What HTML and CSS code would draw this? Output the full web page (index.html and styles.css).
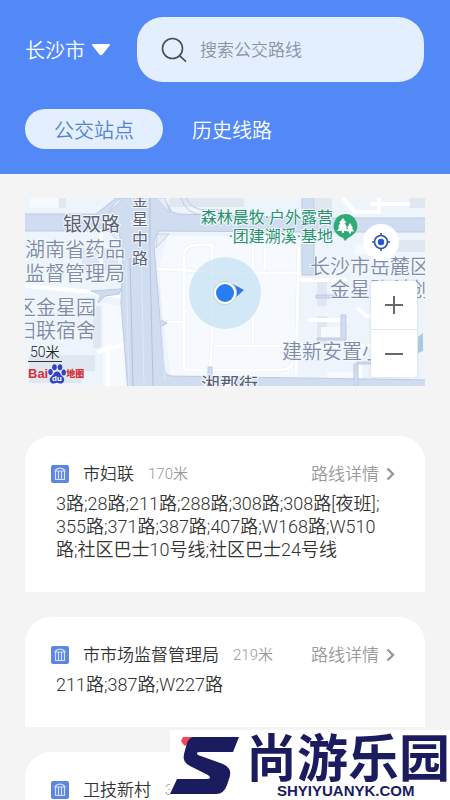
FILE: index.html
```
<!DOCTYPE html>
<html lang="zh-CN">

<head>
    <meta charset="UTF-8">
    <meta name="viewport" content="width=device-width, initial-scale=1.0">
    <title>公交站点</title>

    <link rel="stylesheet" href="styles.css">
</head>

<body>
    <div class="header">
        <div class="header-top">
            <button class="city">长沙市
                <svg width="18" height="12" viewBox="0 0 18 12"><path d="M1 0h16q1.500.3.700 1.500L10.500 10.500q-1.500 1.500-3 0L.3 1.500Q-.2.300 1 0z" fill="#fff"/></svg>
            </button>
            <label class="search">
                <svg width="26" height="26" viewBox="0 0 26 26" fill="none" stroke="#474d57" stroke-width="1.600" stroke-linecap="round"><circle cx="11.500" cy="11.500" r="10"/><path d="M18.800 18.800l5.700 5.400"/></svg>
                <input type="text" placeholder="搜索公交路线" aria-label="搜索公交路线">
            </label>
        </div>
        <div class="tabs">
            <button class="tab active">公交站点</button>
            <button class="tab">历史线路</button>
        </div>
    </div>

    <div class="content">
        <div class="map">
            <svg class="map-bg" viewBox="0 0 400 188" preserveAspectRatio="xMidYMid slice">
                <rect width="400" height="188" fill="#edf4fc"/>
                <!-- 地块 -->
                <g fill="#e1e7f0">
                    <path d="M34 0h7v10h-7zM144 0h75v9h-75zM57 50h36v23H57zM68 108h8v42h-8z"/>
                    <path d="M4 157h66v16H56v12H4zM290 0h17v12h-17zM384 0h16v10h-16zM355 42h45v12h-45zM292 84h10v24h-10zM292 118h10v30h-10z"/>
                </g>
                <g fill="#f6faff">
                    <path d="M5 0h28v10H5zM296 129h26v12h-26zM302 174h27v12h-27zM330 47h30v9h-30z"/>
                    <path d="M78 105l20 3 3 80H78z"/>
                    <path d="M142 38h130v142H146l-7-50-5-60z"/>
                </g>
                <!-- 小路 -->
                <g fill="none" stroke="#fff" stroke-width="4">
                    <path d="M0 88l68 6 30 5M72 154l30-9M76 34v38M83 148v40M318 0l12 14h24V0M345 6h40"/>
                    <path d="M270 82h52M283 122h40M335 152v28M332 110l10 8h30M289 148h90l10 40"/>
                </g>
                <g fill="none" stroke="#e6ecf5" stroke-width="4">
                    <path d="M132 71l27 1 30 3h88M159 173V58q0-11 14-11h14v95l-2 30M138 124h21M189 148h88M228 75v73M228 38v37M240 38v34"/>
                    <path d="M274 36l-3 140M159 172h96q12-1 13-8"/>
                </g>
                <g fill="none" stroke="#fff" stroke-width="3">
                    <path d="M132 71l27 1 30 3h88M159 173V58q0-11 14-11h14v95l-2 30M138 124h21M189 148h88M228 75v73M228 38v37M240 38v34"/>
                    <path d="M274 36l-3 140M159 172h96q12-1 13-8"/>
                </g>
                <!-- 主干道 -->
                <g fill="#d0dcf0" stroke="#bdcae2" stroke-width="1">
                    <path d="M-2 16h73l20-16h48l8 14 6 2 132 4h117v14H285l-150-1q-6 3-6 14l10 123q1 8 8 8l260 4v12H103L96 105 98 57q-2-20-13-24H-2z"/>
                    <path d="M277-2h12v79h-12z"/>
                    <path d="M66 93l30-2-2 5-14 2-7 7 3-8zM136 122l6 3-5 3zM291 97h21v3h-21zM316 117h5v25h-29v-2h24zM332 166h20v-2h-20zM333 166v22h-4v-22zM183 169h4v12h-4z"/>
                    <path d="M156 0q5 17 24 17M160-2q5 14 22 14h12v6" fill="none"/>
                </g>
                <path d="M105 60l3 128M125 0v60l3 128" fill="none" stroke="#b3c1dc"/>
                <path d="M116 40l3 148M101 60l3 128M134 90l6 92" fill="none" stroke="#dfe8f6"/>
                <path d="M131 50l1-14h12zM131 0h9l5 15zM94 32H83l13 14zM92 2h5L83 15z" fill="#e6edf8" stroke="#c3cfe4"/>
                <path d="M393 139l5-4v18l-5 2z" fill="#a7cae1"/>

                <g class="road-name">
                    <text class="street" x="38" y="33">银双路</text>
                    <text x="107" y="8">金</text>
                    <text x="107" y="27">星</text>
                    <text x="107" y="47">中</text>
                    <text x="107" y="66">路</text>
                    <text class="street" x="176" y="194">湘郡街</text>
                </g>
                <g class="place-name">
                    <text x="0" y="59">湖南省药品</text>
                    <text x="0" y="83">监督管理局</text>
                    <text x="-9" y="117">区金星园</text>
                    <text x="-9" y="140">妇联宿舍</text>
                    <text x="285" y="76">长沙市岳麓区</text>
                    <text x="305" y="99">金星路科创</text>
                    <text x="257" y="161">建新安置小</text>
                </g>
                <g class="park-name">
                    <text x="308" y="25">森林晨牧·户外露营</text>
                    <text x="308" y="44">·团建溯溪·基地</text>
                </g>
                <path d="M321 16a12 12 0 0 1 9 19q-3 3-7 5l-3 3-2-3q-5-2-7-5a12 12 0 0 1 10-19z" fill="#2fab76"/>
                <path d="M318 20l-4 5h1.500l-2.500 4h1.500l-2.500 4h5v2h2v-2h4l-2-4h1l-2.500-4h2zM325 25l-3 5h1l-1 3.500h2v2h2v-2h3l-2-3.500h1z" fill="#fff"/>

                <circle cx="200" cy="95" r="36" fill="#c4e0f3" fill-opacity=".7"/>
                <path d="M208 86l11 6-9 8z" fill="#2f79df"/>
                <circle cx="200" cy="95" r="12" fill="#c6d2de"/>
                <circle cx="200" cy="95" r="11" fill="#fff"/>
                <circle cx="200" cy="95" r="9" fill="#287df5"/>
            </svg>
            <div class="map-scale">
                <span>50米</span>
                <div class="baidu">
                    <b>Bai</b>
                    <svg width="18" height="20" viewBox="0 0 18 20" fill="#3142c4"><ellipse cx="2.500" cy="8" rx="2.200" ry="3"/><ellipse cx="6.500" cy="3.200" rx="2.300" ry="3"/><ellipse cx="12" cy="3.200" rx="2.300" ry="3"/><ellipse cx="15.700" cy="8.500" rx="2.200" ry="3"/><path d="M9 7.500c3 0 3 2.500 5 4.500 2 1.500 3 3.500 1.500 6-2 3-4.500.7-6.500.7S4.500 21 2.500 18C1 15.500 2 13.500 4 12s2-4.500 5-4.500z"/><text x="4" y="17" class="du">du</text></svg>
                    <b class="baidu-map">地图</b>
                </div>
            </div>
            <button class="locate" aria-label="定位">
                <svg width="18" height="18" viewBox="0 0 18 18" fill="none" stroke="#2b52ae" stroke-width="1.600"><circle cx="9" cy="9" r="6.500"/><circle cx="9" cy="9" r="3.200" fill="#2456d8" stroke="none"/><path d="M9 0v3M9 15v3M0 9h3M15 9h3"/></svg>
            </button>
            <div class="zoom">
                <button aria-label="放大"><svg width="18" height="18" viewBox="0 0 18 18"><path d="M9 0v18M0 9h18" stroke="#686868" stroke-width="2"/></svg></button>
                <button aria-label="缩小"><svg width="18" height="18" viewBox="0 0 18 18"><path d="M0 9h18" stroke="#686868" stroke-width="2"/></svg></button>
            </div>
        </div>

        <div class="list"></div>
    </div>

    <div class="brand">
        <svg class="brand-logo" width="70" height="58" viewBox="0 0 70 58">
            <path d="M13 0h12l-10 9-2-2-2-3z" fill="#f8435c"/>
            <path d="M23 0h46l-6 15H30q-5 0-2 3l25 9q9 4 7 12l-3 9q-3 9-11 9H0l7-15h29q7 0 2-4L20 29q-8-4-6-12l3-11q2-5 6-6z" fill="#1b1b5f"/>
        </svg>
        <div class="brand-text">
            <p class="brand-name">尚游乐园</p>
            <p class="brand-url">SHYIYUANYK.COM</p>
        </div>
    </div>

    <script>
        var data = [
            { name: "市妇联", distance: "170米", lines: "3路;28路;211路;288路;308路;308路[夜班];355路;371路;387路;407路;W168路;W510路;社区巴士10号线;社区巴士24号线" },
            { name: "市市场监督管理局", distance: "219米", lines: "211路;387路;W227路" },
            { name: "卫技新村", distance: "345米", lines: "" }
        ]
        var list = document.querySelector(".list")

        // 渲染站点
        function renderList(arr, el) {
            el.innerHTML = arr.map(function (item) {
                return `<div class="card">
                    <div class="card-title">
                        <svg width="18" height="18" viewBox="0 0 18 18"><rect width="18" height="18" rx="2" fill="#5c86e2"/><path d="M4 6q1-2.500 5-3 4 .5 5 3zM4.500 6v8M7.500 6v8M10.500 6v8M13.500 6v8M4 14.500h10" fill="none" stroke="#d3e2ff" stroke-width="1.200"/></svg>
                        <h2>${item.name}</h2>
                        <span class="distance">${item.distance}</span>
                        <a class="detail" href="#">路线详情<svg width="9" height="14" viewBox="0 0 9 14"><path d="M1.500 1.500L7 7l-5.500 5.500" fill="none" stroke="#999" stroke-width="2.400"/></svg></a>
                    </div>
                    <p class="lines">${item.lines}</p>
                </div>`
            }).join("")
        }

        renderList(data, list)
    </script>
</body>

</html>
```
FILE: styles.css
```
* {
    margin: 0;
    padding: 0;
    box-sizing: border-box;
}

body {
    display: flex;
    flex-direction: column;
    height: 100vh;
    overflow: hidden;
    background: #f4f4f4;
    font-family: Roboto, "Noto Sans CJK SC", sans-serif;
    font-weight: 350;
    color: #333;
}

button {
    border: none;
    background: none;
    font: inherit;
    color: inherit;
}

svg {
    display: block;
    flex-shrink: 0;
}

.header {
    flex-shrink: 0;
    padding: 17px 26px 25px 25px;
    background: #5389f6;
    color: #fff;
    font-size: 20px;
}

.header-top {
    display: flex;
    align-items: center;
    gap: 27px;
}

.city {
    display: flex;
    align-items: center;
    gap: 7px;
    white-space: nowrap;
}

.search {
    flex: 1;
    display: flex;
    align-items: center;
    gap: 13px;
    min-width: 0;
    height: 65px;
    padding: 0 24px;
    border-radius: 26px;
    background: #e3eefe;
}

.search input {
    flex: 1;
    min-width: 0;
    border: none;
    outline: none;
    background: none;
    font: inherit;
    font-size: 17px;
    color: #333;
}

.search input::placeholder {
    color: #8b929e;
}

.tabs {
    display: flex;
    margin-top: 27px;
}

.tab {
    height: 40px;
    padding: 0 29px;
    border-radius: 20px;
}

.tab.active {
    background: #e3eefe;
    color: #5583cb;
}

.content {
    flex: 1;
    min-height: 0;
    padding: 24px 25px 0;
    overflow: hidden;
}

.map {
    position: relative;
    height: 188px;
    overflow: hidden;
}

.map-bg {
    width: 100%;
    height: 100%;
}

.map-bg text {
    stroke: #f5f9ff;
    stroke-width: 2px;
    paint-order: stroke;
}

.road-name {
    font-size: 16px;
    font-weight: 400;
    fill: #59606f;
}

.road-name .street {
    font-size: 19px;
}

.place-name {
    font-size: 20px;
    fill: #7f8ca5;
}

.park-name {
    font-size: 16px;
    font-weight: 400;
    fill: #26936b;
    text-anchor: end;
}

.map-scale {
    position: absolute;
    left: 3px;
    bottom: 0;
    font-size: 14px;
    line-height: 18px;
    color: #222;
}

.map-scale span {
    display: inline-block;
    padding: 0 2px;
    border-bottom: 1px solid #333;
}

.baidu {
    display: flex;
    align-items: center;
    height: 24px;
    font: bold 13px/20px "Liberation Sans", "Noto Sans CJK SC", sans-serif;
    color: #d6333b;
}

.baidu .du {
    font-size: 8px;
    fill: #fff;
    stroke: none;
}

.baidu .baidu-map {
    font-size: 9px;
}

.locate {
    position: absolute;
    right: 26px;
    top: 26px;
    display: flex;
    align-items: center;
    justify-content: center;
    width: 36px;
    height: 36px;
    border-radius: 50%;
    background: #fff;
}

.zoom {
    position: absolute;
    right: 8px;
    top: 83px;
    width: 46px;
    border-radius: 3px;
    background: #fff;
    box-shadow: 0 0 3px #ccd3dd;
}

.zoom button {
    display: flex;
    align-items: center;
    justify-content: center;
    width: 100%;
    height: 48px;
}

.zoom button + button {
    border-top: 1px solid #e4e4e4;
}

.list {
    display: flex;
    flex-direction: column;
    gap: 25px;
    margin-top: 50px;
}

.card {
    min-height: 110px;
    padding: 25px 26px 31px;
    border-radius: 26px 26px 0 0;
    background: #fff;
}

.card-title {
    display: flex;
    align-items: center;
    height: 26px;
    line-height: 26px;
}

.card-title h2 {
    margin-left: 14px;
    font-size: 17px;
    font-weight: 350;
}

.distance {
    margin-left: 14px;
    font-size: 15px;
    color: #999;
}

.detail {
    display: flex;
    align-items: center;
    gap: 7px;
    margin-left: auto;
    padding-right: 4px;
    font-size: 17px;
    color: #999;
    text-decoration: none;
}

.lines {
    margin: 5px 12px 0 5px;
    font-size: 18px;
    line-height: 23px;
    word-break: break-all;
}

.brand {
    position: fixed;
    right: 0;
    bottom: 0;
    display: flex;
    width: 280px;
    height: 70px;
    padding-top: 7px;
    overflow: hidden;
    background: #fff;
    color: #1b1b5f;
}

.brand-text {
    flex-shrink: 0;
    margin-left: 6px;
}

.brand-name {
    font-size: 51px;
    font-weight: 700;
    line-height: 46px;
}

.brand-url {
    margin-left: 31px;
    font: bold 15px/16px "Liberation Sans", sans-serif;
}
```
